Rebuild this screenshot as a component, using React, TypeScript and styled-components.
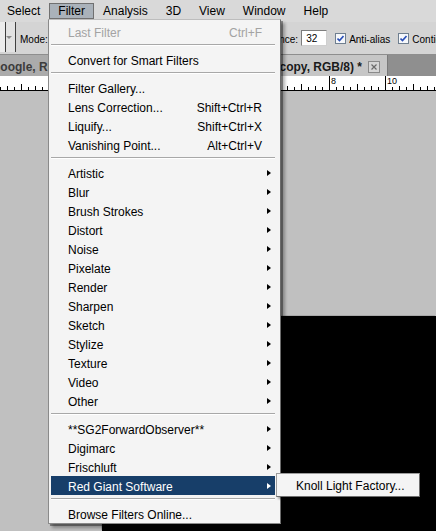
import React from "react";
import styled, { createGlobalStyle } from "styled-components";

const GlobalStyle = createGlobalStyle`
  html, body { margin: 0; padding: 0; }
  body {
    font-family: "Liberation Sans", Arial, sans-serif;
    background: #c0c0c0;
  }
`;

const Screen = styled.div`
  position: relative;
  width: 436px;
  height: 531px;
  overflow: hidden;
  display: flex;
  flex-direction: column;
  background: #c0c0c0;
`;

/* ---------- menu bar ---------- */
const MenuBar = styled.div`
  flex: none;
  height: 22px;
  display: flex;
  align-items: center;
  background: #d9d9d9;
  font-size: 12px;
  color: #000;
  white-space: nowrap;
`;

const MenuList = styled.div`
  display: flex;
  align-items: center;
  margin-left: -2px;
`;

const MenuTitle = styled.div<{ $active?: boolean }>`
  box-sizing: border-box;
  height: 16px;
  line-height: 15px;
  padding: 0 8px;
  border: 1px solid transparent;
  ${(p) =>
    p.$active &&
    `
    background: #aab2ba;
    border-color: #707070;
  `}
`;

/* ---------- options bar ---------- */
const OptionsBar = styled.div`
  flex: none;
  height: 32px;
  display: flex;
  align-items: center;
  background: #d4d4d4;
  border-bottom: 1px solid #8e8e8e;
  font-size: 10px;
  color: #000;
  white-space: nowrap;
  overflow: hidden;
`;

const LeftGroup = styled.div`
  flex: none;
  width: 252px;
  height: 100%;
  display: flex;
  align-items: center;
  gap: 4px;
`;

const PresetPicker = styled.div`
  flex: none;
  box-sizing: border-box;
  width: 16px;
  height: 30px;
  align-self: flex-start;
  display: flex;
  align-items: center;
  justify-content: flex-end;
  border-right: 1px solid #404040;
  background: linear-gradient(to right, #ececec 0 5px, #3c3c3c 5px 6px, #e2e2e2 6px);
  padding-right: 3px;
`;

const PickerArrow = styled.span`
  width: 0;
  height: 0;
  border-left: 3px solid transparent;
  border-right: 3px solid transparent;
  border-top: 3px solid #8a8a8a;
`;

const OptLabel = styled.span`
  flex: none;
  color: #000;
  padding-top: 2px;
`;

const ModeSelect = styled.div`
  flex: none;
  box-sizing: border-box;
  width: 90px;
  height: 18px;
  border: 1px solid #8a8a8a;
  background: #fff;
`;

const RightGroup = styled.div`
  flex: none;
  display: flex;
  align-items: center;
`;

const NumField = styled.div`
  flex: none;
  box-sizing: border-box;
  width: 26px;
  height: 16px;
  margin: 0 8px 0 3px;
  background: #fff;
  border: 1px solid #7d7d7d;
  border-right-color: #cfcfcf;
  border-bottom-color: #cfcfcf;
  padding-left: 4px;
  line-height: 15px;
  font-size: 10px;
`;

const CheckBox = styled.span`
  flex: none;
  box-sizing: border-box;
  width: 11px;
  height: 11px;
  margin-right: 3px;
  border: 1px solid #6f7f90;
  background: #f6f8fb;
  display: flex;
  align-items: center;
  justify-content: center;
`;

const CheckLabel = styled.span`
  flex: none;
  margin-right: 8px;
  padding-top: 2px;
`;

/* ---------- document tabs ---------- */
const TabBar = styled.div`
  flex: none;
  height: 21px;
  display: flex;
  background: #8f8f8f;
  font-size: 12px;
  font-weight: bold;
  white-space: nowrap;
  overflow: hidden;
`;

const Tab = styled.div<{ $active?: boolean; $width: number }>`
  flex: none;
  box-sizing: border-box;
  width: ${(p) => p.$width}px;
  display: flex;
  align-items: center;
  gap: 6px;
  overflow: hidden;
  padding-top: 2px;
  justify-content: ${(p) => (p.$active ? "flex-end" : "flex-start")};
  padding-right: ${(p) => (p.$active ? 7 : 0)}px;
  background: ${(p) => (p.$active ? "#c6c6c6" : "#ababab")};
  color: ${(p) => (p.$active ? "#1a1a1a" : "#3c3c3c")};
  border-right: 1px solid #7a7a7a;
`;

const TabText = styled.span<{ $shift?: number }>`
  flex: none;
  margin-left: ${(p) => p.$shift ?? 0}px;
`;

const TabClose = styled.span`
  flex: none;
  box-sizing: border-box;
  width: 12px;
  height: 12px;
  border: 1px solid #8a8a8a;
  background: #d6d6d6;
  display: flex;
  align-items: center;
  justify-content: center;
`;

/* ---------- ruler ---------- */
const RulerStrip = styled.div`
  flex: none;
  height: 14px;
  background: #fff;
  border-bottom: 1px solid #000;
`;

/* ---------- workspace ---------- */
const Workspace = styled.div`
  flex: 1;
  display: flex;
  padding: 225px 0 0 102px;
  background: #c0c0c0;
`;

const DocCanvas = styled.div`
  flex: 1;
  background: #000;
  box-shadow: -1px -1px 0 #a8a8a8;
`;

/* ---------- dropdown ---------- */
const Dropdown = styled.div`
  position: absolute;
  left: 48px;
  top: 19px;
  box-sizing: border-box;
  width: 233px;
  padding: 2px 5px 0 2px;
  background: #f4f4f4;
  border: 1px solid #8a8a8a;
  border-top-color: #bdbdbd;
  border-right-color: #6c6c6c;
  box-shadow: 2px 2px 0 rgba(0, 0, 0, 0.35), 4px 4px 3px rgba(0, 0, 0, 0.3);
  font-size: 12px;
  white-space: nowrap;
`;

const Item = styled.div<{ $disabled?: boolean; $hl?: boolean }>`
  box-sizing: border-box;
  height: 19px;
  display: flex;
  align-items: center;
  padding: 2px 4px 0 17px;
  color: ${(p) => (p.$disabled ? "#a3a3a3" : p.$hl ? "#ffffff" : "#000000")};
  background: ${(p) => (p.$hl ? "#173e69" : "transparent")};
`;

const ItemLabel = styled.span`
  flex: 1;
`;

const Shortcut = styled.span`
  flex: none;
  margin-right: 9px;
`;

const SubArrow = styled.span<{ $hl?: boolean }>`
  flex: none;
  width: 0;
  height: 0;
  margin-bottom: 2px;
  border-top: 3.5px solid transparent;
  border-bottom: 3.5px solid transparent;
  border-left: 4px solid ${(p) => (p.$hl ? "#ffffff" : "#000000")};
`;

const Separator = styled.div`
  height: 1px;
  margin: 3px 0 4px;
  background: #a8a8a8;
  border-bottom: 1px solid #ffffff;
`;

const Submenu = styled.div`
  position: absolute;
  left: 276px;
  top: 473px;
  box-sizing: border-box;
  width: 144px;
  height: 24px;
  display: flex;
  align-items: center;
  padding: 1px 0 0 19px;
  background: #f4f4f4;
  border: 1px solid #9c9c9c;
  border-right-color: #6f6f6f;
  border-bottom-color: #6f6f6f;
  box-shadow: 2px 2px 2px rgba(0, 0, 0, 0.35);
  font-size: 12px;
  color: #000;
  white-space: nowrap;
`;

type Entry =
  | { kind: "sep" }
  | { kind: "item"; label: string; shortcut?: string; sub?: boolean; disabled?: boolean; hl?: boolean };

const entries: Entry[] = [
  { kind: "item", label: "Last Filter", shortcut: "Ctrl+F", disabled: true },
  { kind: "sep" },
  { kind: "item", label: "Convert for Smart Filters" },
  { kind: "sep" },
  { kind: "item", label: "Filter Gallery..." },
  { kind: "item", label: "Lens Correction...", shortcut: "Shift+Ctrl+R" },
  { kind: "item", label: "Liquify...", shortcut: "Shift+Ctrl+X" },
  { kind: "item", label: "Vanishing Point...", shortcut: "Alt+Ctrl+V" },
  { kind: "sep" },
  ...[
    "Artistic",
    "Blur",
    "Brush Strokes",
    "Distort",
    "Noise",
    "Pixelate",
    "Render",
    "Sharpen",
    "Sketch",
    "Stylize",
    "Texture",
    "Video",
    "Other",
  ].map((l) => ({ kind: "item" as const, label: l, sub: true })),
  { kind: "sep" },
  { kind: "item", label: "**SG2ForwardObserver**", sub: true },
  { kind: "item", label: "Digimarc", sub: true },
  { kind: "item", label: "Frischluft", sub: true },
  { kind: "item", label: "Red Giant Software", sub: true, hl: true },
  { kind: "sep" },
  { kind: "item", label: "Browse Filters Online..." },
];

const Ruler: React.FC = () => {
  const ticks: React.ReactNode[] = [];
  for (let x = 0; x <= 436; x += 7) {
    const rel = x - 49;
    let h = 3;
    if (rel % 56 === 0) h = 14;
    else if (rel % 28 === 0) h = 6;
    else if (rel % 14 === 0) h = 4;
    ticks.push(<line key={x} x1={x + 0.5} x2={x + 0.5} y1={14 - h} y2={14} stroke="#000" strokeWidth={1} />);
    if (rel % 56 === 0 && x > 285) {
      const val = (x - 105) / 28;
      ticks.push(
        <text key={"t" + x} x={x + 2} y={8} fontSize={9} fontFamily="Liberation Sans, Arial, sans-serif" fill="#000">
          {val}
        </text>
      );
    }
  }
  return (
    <svg width="436" height="14" viewBox="0 0 436 14" style={{ display: "block" }}>
      {ticks}
    </svg>
  );
};

const Check: React.FC = () => (
  <svg width="7" height="7" viewBox="0 0 7 7">
    <path d="M0.5 3.5 L2.5 5.5 L6.5 1" fill="none" stroke="#2a4fb8" strokeWidth="1.6" />
  </svg>
);

const CloseX: React.FC = () => (
  <svg width="6" height="6" viewBox="0 0 6 6">
    <path d="M0.5 0.5 L5.5 5.5 M5.5 0.5 L0.5 5.5" stroke="#6a6a6a" strokeWidth="1.2" />
  </svg>
);

export default function App() {
  return (
    <>
      <GlobalStyle />
      <Screen>
        <MenuBar>
          <MenuList>
            <MenuTitle>Select</MenuTitle>
            <MenuTitle $active>Filter</MenuTitle>
            <MenuTitle>Analysis</MenuTitle>
            <MenuTitle>3D</MenuTitle>
            <MenuTitle>View</MenuTitle>
            <MenuTitle>Window</MenuTitle>
            <MenuTitle>Help</MenuTitle>
          </MenuList>
        </MenuBar>

        <OptionsBar>
          <LeftGroup>
            <PresetPicker>
              <PickerArrow />
            </PresetPicker>
            <OptLabel>Mode:</OptLabel>
            <ModeSelect />
          </LeftGroup>
          <RightGroup>
            <OptLabel>Tolerance:</OptLabel>
            <NumField>32</NumField>
            <CheckBox>
              <Check />
            </CheckBox>
            <CheckLabel>Anti-alias</CheckLabel>
            <CheckBox>
              <Check />
            </CheckBox>
            <CheckLabel>Contiguous</CheckLabel>
          </RightGroup>
        </OptionsBar>

        <TabBar>
          <Tab $width={160}>
            <TabText $shift={-9}>Google, RGB/8)</TabText>
          </Tab>
          <Tab $active $width={228}>
            <TabText>copy, RGB/8) *</TabText>
            <TabClose>
              <CloseX />
            </TabClose>
          </Tab>
        </TabBar>

        <RulerStrip>
          <Ruler />
        </RulerStrip>

        <Workspace>
          <DocCanvas />
        </Workspace>

        <Dropdown>
          {entries.map((e, i) =>
            e.kind === "sep" ? (
              <Separator key={i} />
            ) : (
              <Item key={i} $disabled={e.disabled} $hl={e.hl}>
                <ItemLabel>{e.label}</ItemLabel>
                {e.shortcut && <Shortcut>{e.shortcut}</Shortcut>}
                {e.sub && <SubArrow $hl={e.hl} />}
              </Item>
            )
          )}
        </Dropdown>

        <Submenu>Knoll Light Factory...</Submenu>
      </Screen>
    </>
  );
}
